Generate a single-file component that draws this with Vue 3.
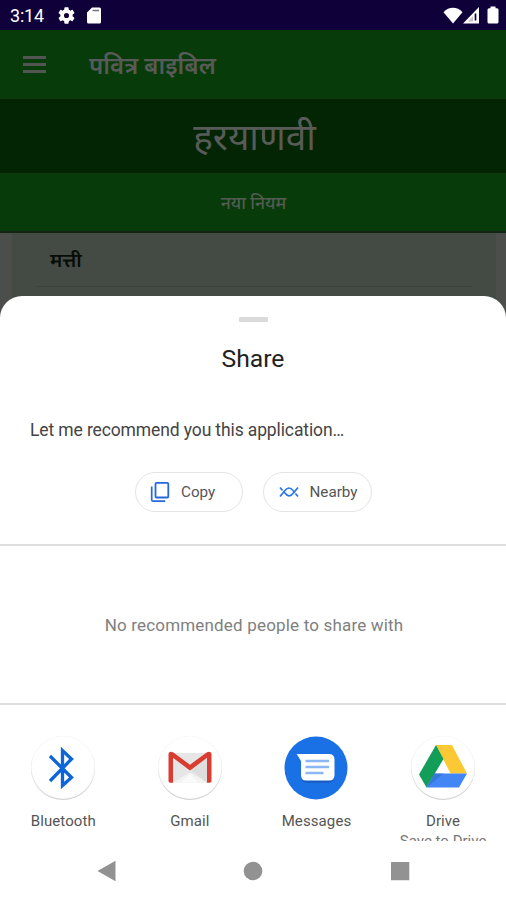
<script setup>
const apps = [
  { id: 'bluetooth', name: 'Bluetooth' },
  { id: 'gmail', name: 'Gmail' },
  { id: 'messages', name: 'Messages' },
  { id: 'drive', name: 'Drive', detail: 'Save to Drive' },
]
</script>

<template>
  <div class="screen">
    <header class="status">
      <span class="clock">3:14</span>
      <svg class="gear" width="17" height="17" viewBox="2 2 20 20" fill="#fff"><path d="M19.14 12.94c.04-.3.06-.61.06-.94 0-.32-.02-.64-.07-.94l2.03-1.58a.49.49 0 0 0 .12-.61l-1.92-3.32a.49.49 0 0 0-.59-.22l-2.39.96c-.5-.38-1.03-.7-1.62-.94l-.36-2.54a.48.48 0 0 0-.48-.41h-3.84a.47.47 0 0 0-.47.41l-.36 2.54c-.59.24-1.13.57-1.62.94l-2.39-.96a.48.48 0 0 0-.59.22L2.74 8.87a.47.47 0 0 0 .12.61l2.03 1.58c-.05.3-.09.63-.09.94s.02.64.07.94l-2.03 1.58a.49.49 0 0 0-.12.61l1.92 3.32c.12.22.37.29.59.22l2.39-.96c.5.38 1.03.7 1.62.94l.36 2.54c.05.24.24.41.48.41h3.84c.24 0 .44-.17.47-.41l.36-2.54c.59-.24 1.13-.56 1.62-.94l2.39.96c.22.08.47 0 .59-.22l1.92-3.32a.47.47 0 0 0-.12-.61l-2.01-1.58zM12 15a3 3 0 1 1 0-6 3 3 0 0 1 0 6z" /></svg>
      <svg class="card-icon" width="14" height="17" viewBox="0 0 14 17"><path d="M5 .5h7.5A1.5 1.5 0 0 1 14 2v13a1.5 1.5 0 0 1-1.500 1.500h-11A1.500 1.500 0 0 1 0 15V5.500z" fill="#fff" /><path d="M5.500 3.500h6.500" stroke="#77728c" stroke-width="1.500" /></svg>
      <div class="signals">
        <svg width="20" height="17" viewBox="0 0 20 17"><path d="M.5 5.200C5.800-.7 14.200-.7 19.500 5.200L10 16.500z" fill="#fff" /></svg>
        <svg width="17" height="17" viewBox="0 0 17 17"><path d="M0 16.500 16 0v16.500z" fill="#fff" /><path d="M12.500 6.500v7" stroke="#10003a" stroke-width="1.700" /><path d="M5 14.500 10 9v5.500z" fill="#c5c0d0" /></svg>
        <svg class="battery" width="12" height="18" viewBox="0 0 12 18"><path d="M3.500.5h5v1.700H10a1.500 1.500 0 0 1 1.500 1.500V16a1.500 1.500 0 0 1-1.500 1.500H2A1.500 1.500 0 0 1 .5 16V3.700A1.500 1.500 0 0 1 2 2.200h1.500z" fill="#fff" /></svg>
      </div>
    </header>

    <div class="appbar">
      <div class="menu"><i></i><i></i><i></i></div>
      <span class="app-title">पवित्र बाइबिल</span>
    </div>
    <div class="language">हरयाणवी</div>
    <div class="tab">नया नियम</div>
    <div class="list">
      <div class="list-card">
        <div class="book">मत्ती</div>
      </div>
    </div>

    <main class="sheet">
      <div class="handle"></div>
      <h1>Share</h1>
      <p class="preview">Let me recommend you this application…</p>
      <div class="actions">
        <button class="chip">
          <svg width="20" height="22" viewBox="0 0 20 22" fill="none" stroke="#2468dc"><rect x="5.500" y="1.900" width="12.800" height="14.600" rx="1" stroke-width="1.800" /><path d="M1.700 5.500v13.200a1.500 1.500 0 0 0 1.500 1.500h12" stroke-width="1.700" /></svg>
          <span>Copy</span>
        </button>
        <button class="chip">
          <svg width="20" height="12" viewBox="0 0 20 12" fill="none" stroke="#2874e8" stroke-width="1.700"><path d="M1 10.500 6 4.500Q10-.5 14 4.500M6 7Q10 12.500 14 7.500L19 1.500M1 1.500 3.600 4.500M16.400 7.500 19 10.500" /><path d="M6 7 4.600 5.500M14 4.500l1.700 2" /></svg>
          <span>Nearby</span>
        </button>
      </div>
      <div class="people">No recommended people to share with</div>
      <div class="apps">
        <div v-for="app in apps" :key="app.id" class="app">
          <div class="icon" :class="app.id">
            <svg v-if="app.id === 'bluetooth'" width="64" height="64" viewBox="0 0 64 64"><path d="M19 20 40.500 41.500 31.500 49.500V14.500L40.500 23 19 45" fill="none" stroke="#0d65da" stroke-width="3.300" /></svg>
            <svg v-else-if="app.id === 'gmail'" width="64" height="64" viewBox="0 0 64 64"><path d="M12 17h40v29.500H12z" fill="#e6e6e6" /><path d="M15 46.500 29 38l3-1 3 1 14 8.500z" fill="#f3f3f3" /><path d="M15 20 49 46.500V20L32 33z" fill="#d9d9d9" opacity=".6" /><path d="M23 46.500 32 37.500l8 9z" fill="#fafafa" /><path d="M10.500 18.500c0-3 2.500-3.500 4.500-2.200L32 28.700l17-12.400c2-1.300 4.500-.8 4.500 2.200V45a1.700 1.700 0 0 1-1.700 1.700H49V21.800L32 34.500 15 21.800v24.900h-2.800a1.700 1.700 0 0 1-1.700-1.700z" fill="#d93c30" /></svg>
            <svg v-else-if="app.id === 'messages'" width="64" height="64" viewBox="0 0 64 64"><circle cx="32" cy="32" r="31.500" fill="#1a70e5" /><path d="M17 43q2 4 7 4h20q6 0 6.500-7z" fill="#1556b5" opacity=".65" /><path d="M12.700 18H45q5.500 0 5.500 5.500V39q0 5.500-5.500 5.500H22q-5 0-5-5.500V25z" fill="#fff" /><path d="M21.500 25H45M21.500 31H45M21.500 37H39.500" stroke="#8cb6f4" stroke-width="2.700" /></svg>
            <svg v-else width="64" height="64" viewBox="0 0 64 64"><path d="M25 9h16l15 28.500H39.500z" fill="#fcc934" /><path d="M25 9 8 38.500 15.500 51.500 32.500 23z" fill="#129d58" /><path d="M23.500 37.500H56L48 51.500H15.500z" fill="#4285f4" /><path d="M23.500 37.500h9l-17 14z" fill="#326ccb" opacity=".6" /></svg>
          </div>
          <span class="name">{{ app.name }}</span>
          <span v-if="app.detail" class="detail">{{ app.detail }}</span>
        </div>
      </div>
      <nav class="nav">
        <svg width="20" height="22" viewBox="0 0 20 22" fill="#929292"><path d="M.5 11 18.500.8v20.400z" /></svg>
        <svg width="20" height="22" viewBox="0 0 20 22" fill="#929292"><circle cx="10" cy="11" r="9.300" /></svg>
        <svg width="20" height="22" viewBox="0 0 20 22" fill="#929292"><rect x="1" y="2" width="18.300" height="18.300" rx=".5" /></svg>
      </nav>
    </main>
  </div>
</template>

<style>
body { margin: 0; background: #fff; }
</style>

<style scoped>
* { box-sizing: border-box; }
.screen { width: 506px; height: 900px; overflow: hidden; display: flex; flex-direction: column; font-family: Roboto, "Noto Sans", sans-serif; background: #fff; }
.status { height: 30px; flex: none; display: flex; align-items: center; padding: 1px 7.500px 0 10px; background: #10003a; color: #fff; }
.clock { font-size: 18px; width: 48px; line-height: 30px; letter-spacing: -.2px; }
.gear { margin-top: -1px; }
.card-icon { margin-left: 11.500px; }
.signals { margin-left: auto; display: flex; align-items: center; margin-top: -1px; }
.battery { margin-left: 7px; }
.appbar { height: 69px; flex: none; display: flex; align-items: center; padding: 2px 0 0 23px; background: #073b09; }
.menu { width: 23px; margin-right: 43px; margin-top: -3px; display: flex; flex-direction: column; gap: 4px; }
.menu i { height: 3px; background: #525652; }
.app-title { color: #575a57; font-size: 24px; font-weight: 600; line-height: 34px; white-space: nowrap; }
.language { height: 74px; flex: none; display: flex; align-items: center; justify-content: center; padding: 4px 0 0 3px; background: #032503; color: #585b58; font-size: 37px; line-height: 70px; white-space: nowrap; }
.tab { height: 60px; flex: none; display: flex; align-items: center; justify-content: center; padding-left: 1px; background: #073b09; border-bottom: 2px solid #142414; color: #545b53; font-size: 17.500px; font-weight: 500; white-space: nowrap; }
.list { height: 87px; flex: none; padding: 0 10px 0 12px; background: #4c4e4c; }
.list-card { height: 100%; background: #444b44; padding: 0 24px; }
.book { height: 54px; border-bottom: 1px solid #3b443b; padding-left: 14px; color: #080d08; font-size: 19.500px; font-weight: 600; line-height: 55px; }
.sheet { height: 604px; flex: none; margin-top: -24px; background: #fff; border-radius: 22px 22px 0 0; display: flex; flex-direction: column; }
.handle { width: 29px; height: 5px; flex: none; margin: 21px auto 0; border-radius: 1px; background: #dadada; }
h1 { margin: 21px 0 0; height: 32px; line-height: 32px; text-align: center; color: #222; font-size: 24.700px; font-weight: 400; }
.preview { margin: 43px 0 0 30px; height: 24px; line-height: 24px; color: #444; font-size: 17.500px; letter-spacing: -.12px; white-space: nowrap; }
.actions { margin-top: 30px; display: flex; justify-content: center; gap: 20px; height: 40px; flex: none; }
.chip { width: 108.500px; height: 40px; padding: 0 0 0 14.500px; display: flex; align-items: center; gap: 11px; border: 1.500px solid #e4e4e4; border-radius: 20px; background: #fff; color: #555; font-family: inherit; font-size: 15.200px; white-space: nowrap; }
.people { height: 161px; flex: none; margin-top: 32px; border-top: 2px solid #dedede; border-bottom: 2px solid #dedede; display: flex; align-items: center; justify-content: center; padding-left: 2px; color: #808080; font-size: 17px; letter-spacing: .18px; white-space: nowrap; }
.apps { height: 136px; flex: none; overflow: hidden; display: grid; grid-template-columns: repeat(4, 126.600px); padding: 31px 0 0; }
.app { display: flex; flex-direction: column; align-items: center; white-space: nowrap; }
.icon { width: 64px; height: 64px; flex: none; border-radius: 50%; }
.icon svg { display: block; }
.bluetooth, .gmail, .drive { box-shadow: inset 0 -1px 1px #ccc, inset 0 0 1px #e7e7e7; }
.name { margin-top: 11px; line-height: 20px; font-size: 15px; color: #555; letter-spacing: .1px; }
.detail { line-height: 20px; font-size: 15px; color: #777; letter-spacing: 0; }
.nav { height: 58px; display: flex; align-items: center; gap: 126.400px; padding: 2px 0 0 96.800px; }
</style>
